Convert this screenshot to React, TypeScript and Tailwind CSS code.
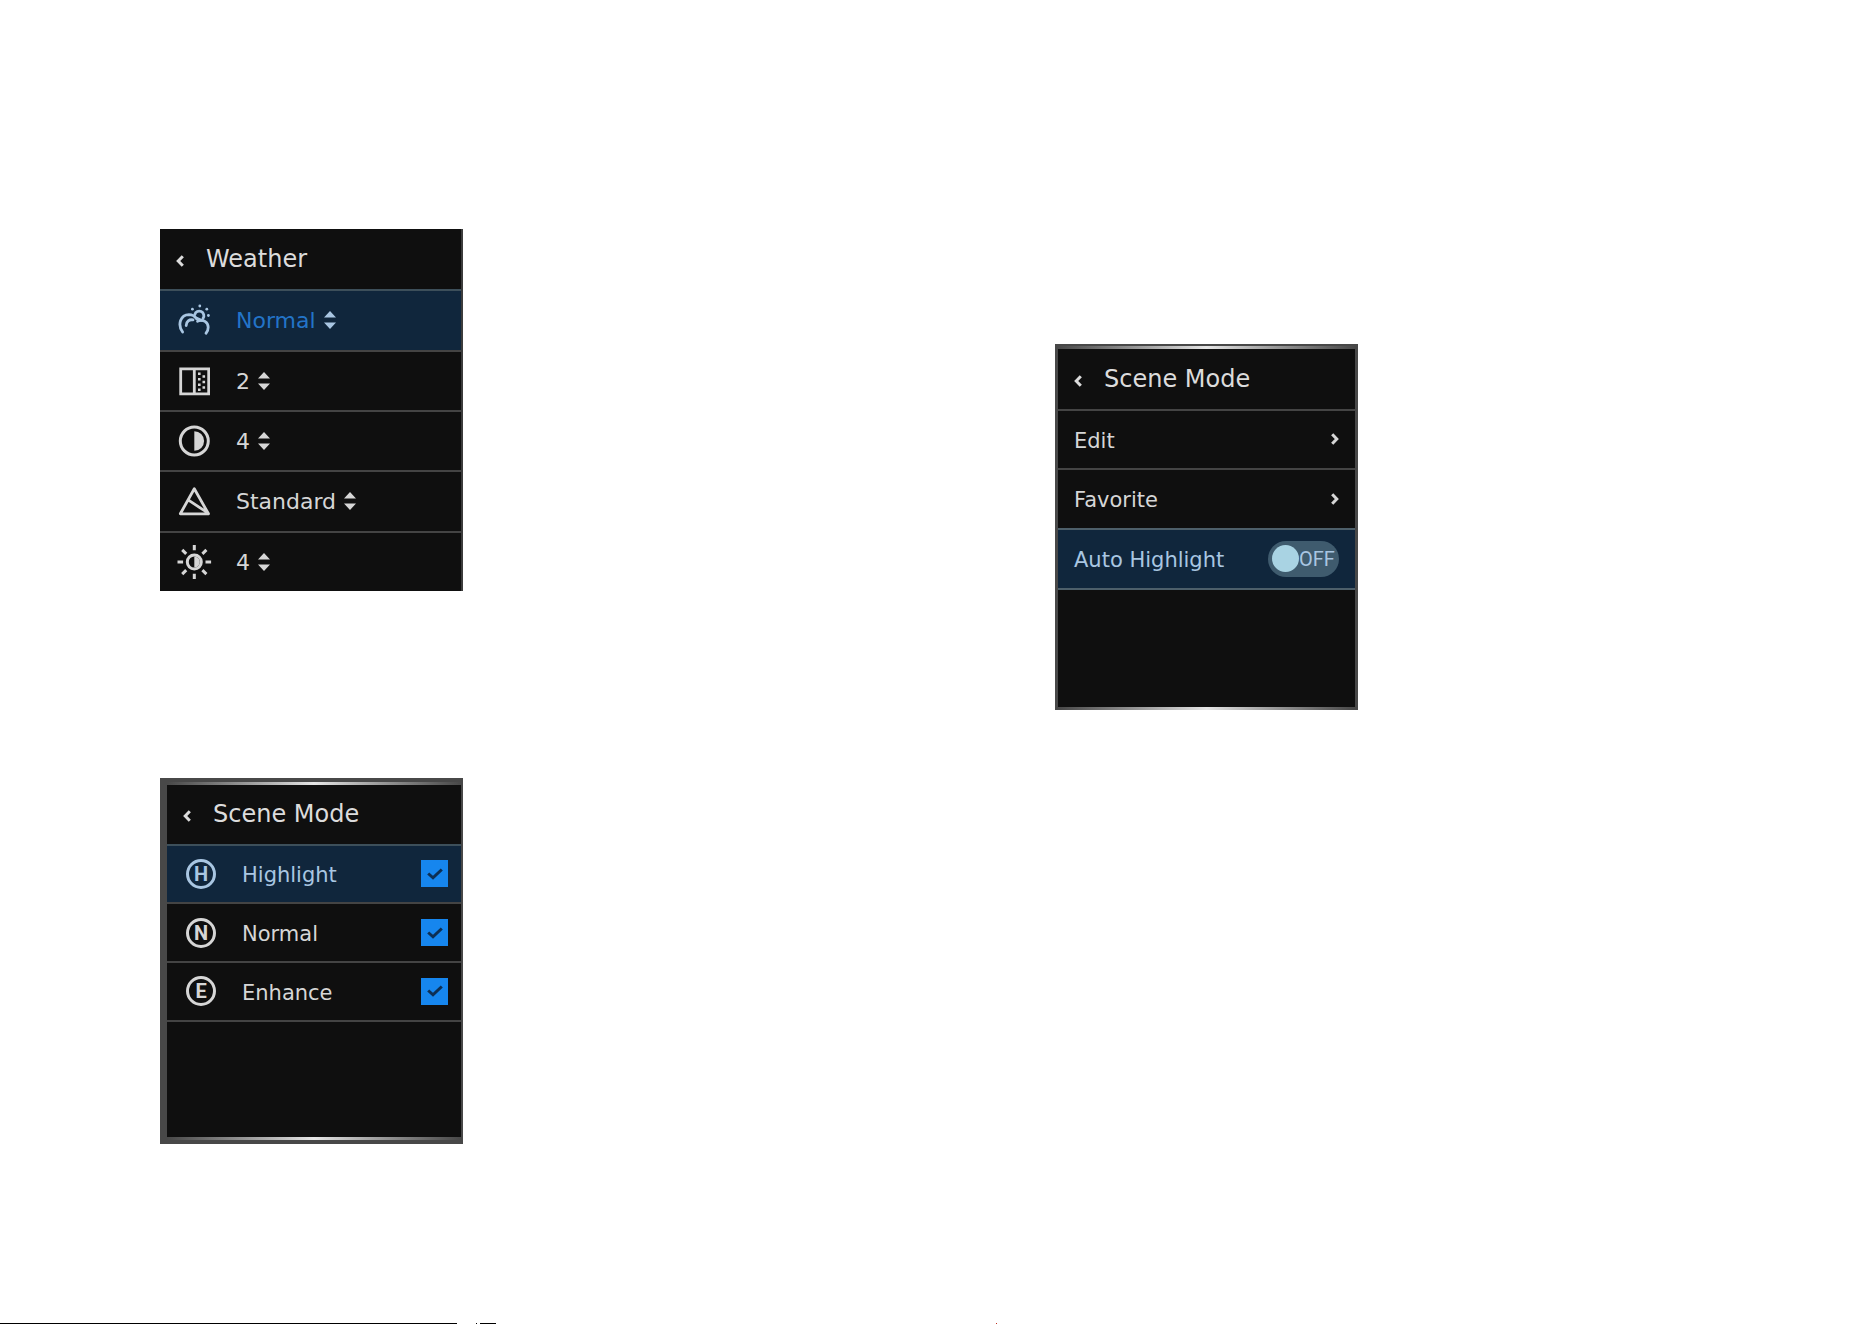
import { useState } from 'react'
import type { ReactNode } from 'react'

interface SettingRowProps {
  label: string
  icon: ReactNode
  options: string[]
  active?: boolean
}

interface SceneRowProps {
  label: string
  letter: string
  active?: boolean
}

function ChevronIcon({ right = false }: { right?: boolean }) {
  return (
    <svg className="w-2 h-3 shrink-0" viewBox="0 0 8 12" fill="none" stroke="currentColor" strokeWidth={3}>
      <path d={right ? 'M1.200 1.200 5.800 6l-4.600 4.800' : 'M6.800 1.200 2.200 6l4.600 4.800'} />
    </svg>
  )
}

function WeatherIcon() {
  return (
    <svg className="w-8 h-8 shrink-0" viewBox="0 0 32 32" fill="none" stroke="currentColor" strokeWidth={2.8} strokeLinecap="round">
      <path d="M4.600 28C-.8 20.500 2.500 10.800 11 10.600c3.200 0 5.600 1.300 7.500 4" />
      <path d="M8.200 21.500c.2-4 3-6.300 6.800-5.600" />
      <path d="M19.500 17.200c5.500-2.400 10.700.8 10.700 6.100 0 2.400-.7 4.300-2.200 6" />
      <path d="M16.800 10.600a4.600 4.600 0 1 1 8.200 3.800" />
      <path d="M18.800 14.200l4.500 2" />
      <g fill="currentColor" stroke="none">
        <circle cx="14.400" cy="5.200" r="1.400" />
        <circle cx="21.800" cy="2" r="1.400" />
        <circle cx="28.800" cy="5.200" r="1.400" />
        <circle cx="30.400" cy="11.500" r="1.400" />
      </g>
    </svg>
  )
}

function NoiseIcon() {
  return (
    <svg className="w-8 h-8 shrink-0" viewBox="0 0 32 32" fill="none" stroke="currentColor" strokeWidth={2.800}>
      <path d="M2.700 3.800h28v25h-28zM16.300 3.800v25" />
      <g fill="currentColor" stroke="none">
        <path d="M20 7.500h2.600v2.600H20zM20 13h2.600v2.600H20zM20 18.500h2.600v2.600H20zM20 23.500h2.600v2.600H20z" />
        <path d="M24.500 10.200h2.600v2.600h-2.600zM24.500 15.700h2.600v2.600h-2.600zM24.500 21.200h2.600v2.600h-2.600z" />
      </g>
    </svg>
  )
}

function ContrastIcon() {
  return (
    <svg className="w-8 h-8 shrink-0" viewBox="0 0 32 32">
      <circle cx="16.300" cy="16" r="14" fill="none" stroke="currentColor" strokeWidth={3} />
      <path d="M16.300 6.200a9.800 9.800 0 0 1 0 19.600z" fill="currentColor" />
    </svg>
  )
}

function PrismIcon() {
  return (
    <svg className="w-8 h-8 shrink-0" viewBox="0 0 32 32" fill="none" stroke="currentColor" strokeWidth={2.800} strokeLinejoin="round">
      <path d="M16.300 3.800 30.500 28.800H2.300zM10.500 15.200l19 12.500" />
    </svg>
  )
}

function BrightnessIcon() {
  return (
    <svg className="w-8 h-8 shrink-0 overflow-visible" viewBox="0 0 32 32" fill="none" stroke="currentColor" strokeWidth={3}>
      <circle cx="16.300" cy="16" r="7" />
      <path d="M16.300 10.500a5.500 5.500 0 0 1 0 11z" fill="currentColor" stroke="none" />
      <path d="M16.300-1v5.200M16.300 27.800V33M-.5 16h5.600M27.500 16h5.600" />
      <path d="M4.200 3.900l4 4M24.400 24.100l4 4M28.400 3.900l-4 4M8.200 24.100l-4 4" />
    </svg>
  )
}

function LetterIcon({ letter }: { letter: string }) {
  return (
    <span className="w-8 shrink-0 flex justify-center">
      <span className="w-[30px] h-[30px] rounded-full border-3 flex items-center justify-center font-['Roboto','Liberation_Sans',sans-serif] font-bold text-xl leading-none">
        {letter}
      </span>
    </span>
  )
}

function PanelHeader({ title }: { title: string }) {
  return (
    <header className="flex items-center gap-[22px] pl-4 text-[#dcdcdc]">
      <button aria-label="Back" className="pt-1">
        <ChevronIcon />
      </button>
      <h2 className="text-2xl">{title}</h2>
    </header>
  )
}

// Shiny edge along the top and bottom of a framed panel
function Sheen() {
  return <div className="h-[3px] bg-linear-to-r from-[#484848] via-[#e6e6e6] to-[#484848]" />
}

const rowColors = {
  active: 'border-[#3d4f5a] bg-[#10263c] text-[#a9c6e2]',
  idle: 'border-[#444444] text-[#d6d6d6]',
}

function SettingRow({ label, icon, options, active }: SettingRowProps) {
  return (
    <label className={`flex items-center gap-[26px] border-t-2 pl-[18px] ${active ? rowColors.active : rowColors.idle}`}>
      {icon}
      <span className="flex items-center gap-2">
        <select
          aria-label={label}
          className={`appearance-none field-sizing-content bg-transparent pt-0.5 text-[22px] leading-7 outline-none ${active ? 'text-[#2374c8]' : ''}`}
        >
          {options.map((option) => (
            <option key={option}>{option}</option>
          ))}
        </select>
        <svg className="w-3 h-[18px]" viewBox="0 0 12 18" fill="currentColor">
          <path d="M6 0l6 6.500H0zM6 18l6-6.500H0z" />
        </svg>
      </span>
    </label>
  )
}

function SceneRow({ label, letter, active }: SceneRowProps) {
  const [checked, setChecked] = useState(true)

  return (
    <label className={`flex items-center gap-[25px] border-t-2 pl-[18px] pr-[13px] ${active ? rowColors.active : rowColors.idle}`}>
      <LetterIcon letter={letter} />
      <span className="flex-1 pt-1 text-[21px]">{label}</span>
      <span className="grid place-items-center">
        <input
          type="checkbox"
          checked={checked}
          onChange={(e) => setChecked(e.target.checked)}
          className="col-start-1 row-start-1 appearance-none w-[27px] h-[27px] bg-[#1686ee]"
        />
        {checked && (
          <svg
            className="col-start-1 row-start-1 w-4 h-3 pointer-events-none text-[#0d2f54]"
            viewBox="0 0 16 12"
            fill="none"
            stroke="currentColor"
            strokeWidth={3}
          >
            <path d="M1.200 5.500l4.800 4.300L14.800 1.500" />
          </svg>
        )}
      </span>
    </label>
  )
}

function LinkRow({ label }: { label: string }) {
  return (
    <button className="flex items-center justify-between border-t-2 border-[#444444] px-4 text-[21px] text-[#d6d6d6]">
      <span className="pt-1">{label}</span>
      <ChevronIcon right />
    </button>
  )
}

function ToggleRow({ label }: { label: string }) {
  const [on, setOn] = useState(false)

  return (
    <label className="flex items-center justify-between border-t-2 border-[#4d5f6a] bg-[#10263c] px-4 text-[21px] text-[#a9c6e2]">
      <span className="pt-1">{label}</span>
      <span className={`flex items-center w-[71px] h-9 rounded-full bg-[#3f5b6e] px-1 ${on ? 'flex-row-reverse' : ''}`}>
        <input
          type="checkbox"
          role="switch"
          checked={on}
          onChange={(e) => setOn(e.target.checked)}
          className="appearance-none w-[27px] h-[27px] shrink-0 rounded-full bg-[#a9d3e3]"
        />
        <span className="font-['Roboto','Liberation_Sans',sans-serif] text-xl">{on ? 'ON' : 'OFF'}</span>
      </span>
    </label>
  )
}

export default function App() {
  return (
    <div className="min-h-screen flex flex-col bg-white font-['DejaVu_Sans',sans-serif]">
      <main className="flex-1 grid grid-cols-[895fr_816fr] items-start pl-40">
        <div className="flex flex-col gap-[187px] pt-[229px]">
          <section className="w-[303px] h-[362px] grid grid-rows-6 bg-[#0f0f0f] border-r-2 border-[#3c3c3c]">
            <PanelHeader title="Weather" />
            <SettingRow label="Weather mode" icon={<WeatherIcon />} options={['Normal']} active />
            <SettingRow label="Noise reduction" icon={<NoiseIcon />} options={['2']} />
            <SettingRow label="Contrast" icon={<ContrastIcon />} options={['4']} />
            <SettingRow label="Sharpness" icon={<PrismIcon />} options={['Standard']} />
            <SettingRow label="Brightness" icon={<BrightnessIcon />} options={['4']} />
          </section>

          <section className="w-[303px] h-[366px] flex flex-col bg-[#0f0f0f] border-[#484848] border-t-4 border-b-4 border-l-[7px] border-r-2">
            <Sheen />
            <div className="flex-1 grid grid-rows-6">
              <PanelHeader title="Scene Mode" />
              <SceneRow label="Highlight" letter="H" active />
              <SceneRow label="Normal" letter="N" />
              <SceneRow label="Enhance" letter="E" />
              <div className="row-span-2 border-t-2 border-[#444444]" />
            </div>
            <Sheen />
          </section>
        </div>

        <div className="pt-[344px]">
          <section className="w-[303px] h-[366px] flex flex-col bg-[#0f0f0f] border-[#484848] border-t-2 border-x-3">
            <Sheen />
            <div className="flex-1 grid grid-rows-6">
              <PanelHeader title="Scene Mode" />
              <LinkRow label="Edit" />
              <LinkRow label="Favorite" />
              <ToggleRow label="Auto Highlight" />
              <div className="row-span-2 border-t-2 border-[#4d5f6a]" />
            </div>
            <Sheen />
          </section>
        </div>
      </main>

      <footer className="flex h-px">
        <div className="w-[457px] bg-black" />
        <div className="ml-[19px] w-px bg-black" />
        <div className="ml-[3px] w-4 bg-black" />
        <div className="ml-[500px] w-px bg-[#c03020]" />
      </footer>
    </div>
  )
}
